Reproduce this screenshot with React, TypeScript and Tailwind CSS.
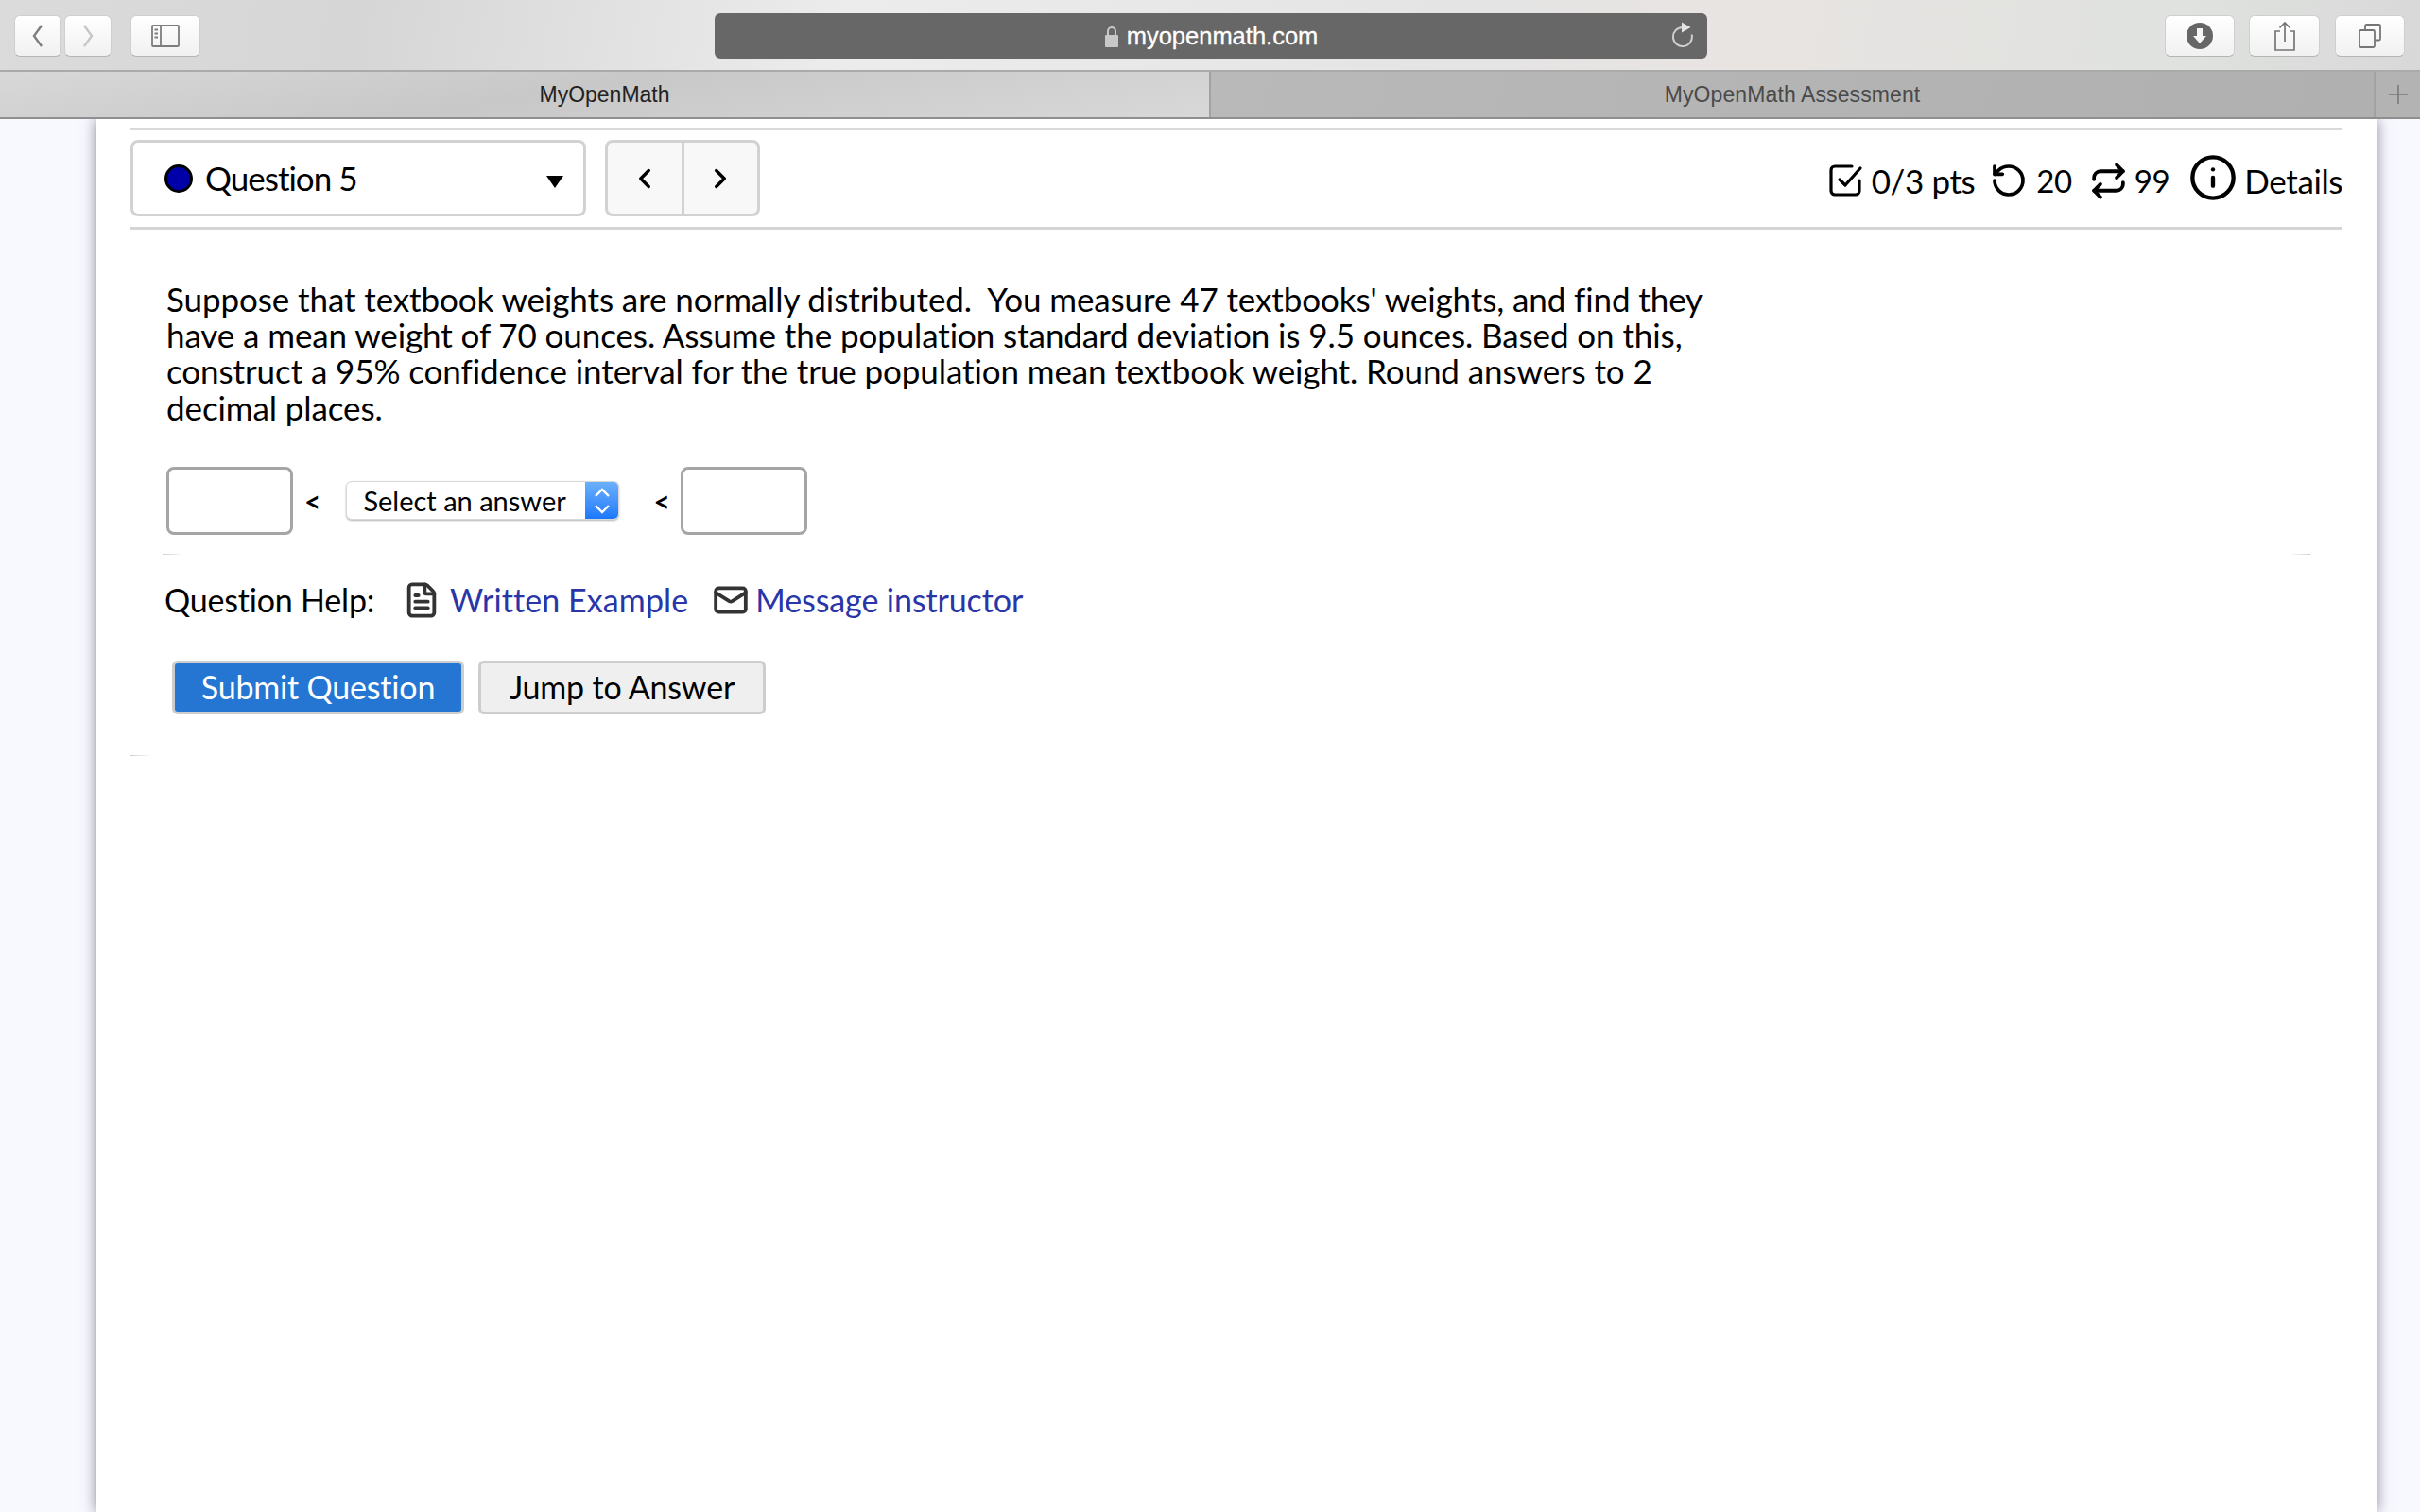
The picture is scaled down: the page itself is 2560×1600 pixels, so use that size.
import React from "react";
import { RotateCcw, Repeat, Info, FileText, Mail, ChevronLeft, ChevronRight } from "lucide-react";

function ToolButton({ className, children }: { className: string; children?: React.ReactNode }) {
  return (
    <div className={"flex h-[44px] items-center justify-center rounded-[6px] border border-[#cfcfcf] border-b-[#b5b5b5] bg-gradient-to-b from-[#ffffff] to-[#f1f1f1] " + className}>
      {children}
    </div>
  );
}

export default function App() {
  return (
    <div className="flex h-[1600px] w-[2560px] flex-col overflow-hidden bg-[#f8f8ff] font-['Lato','Noto_Sans',sans-serif] text-black">
      {/* toolbar */}
      <div className="flex h-[76px] shrink-0 items-start border-b-2 border-[#aaaaaa] bg-[linear-gradient(100deg,#dbdbdb_0%,#d6d6d6_15%,#ececec_35%,#e4e4e4_60%,#e8e4e2_72%,#dfe2df_90%,#d8d8d8_100%)] pl-[15px]">
        <div className="mt-[16px] flex gap-[3px]">
          <ToolButton className="w-[50px]">
            <svg width="22" height="26" viewBox="0 0 22 26" fill="none" stroke="#7d7d7d" strokeWidth="2.4"><path d="M15 2 L7 13 L15 24" /></svg>
          </ToolButton>
          <ToolButton className="w-[50px]">
            <svg width="22" height="26" viewBox="0 0 22 26" fill="none" stroke="#c6c6c6" strokeWidth="2.4"><path d="M7 2 L15 13 L7 24" /></svg>
          </ToolButton>
        </div>
        <ToolButton className="ml-[20px] mt-[16px] w-[74px]">
          <svg width="30" height="24" viewBox="0 0 30 24" fill="none" stroke="#7d7d7d" strokeWidth="1.8">
            <rect x="1" y="1" width="28" height="22" rx="1" />
            <path d="M10 1 V23" />
            <path d="M3.5 5.5 H7 M3.5 9.5 H7 M3.5 13.5 H7" strokeWidth="2" />
          </svg>
        </ToolButton>
        <div className="relative ml-[544px] mt-[14px] flex h-[48px] w-[1050px] items-center justify-center rounded-[6px] bg-[#676767] pt-[1px]">
          <svg width="16" height="24" viewBox="0 0 16 24" className="mr-[8px]">
            <path d="M4 11 V6 a4 4 0 0 1 8 0 V11" fill="none" stroke="#c8c8c8" strokeWidth="2" />
            <rect x="1" y="10" width="14" height="13" rx="1" fill="#c8c8c8" />
          </svg>
          <span className="font-['Liberation_Sans',sans-serif] text-[25.5px] leading-none text-white [-webkit-text-stroke:0.3px_white]">myopenmath.com</span>
          <svg width="26" height="28" viewBox="0 0 26 28" fill="none" stroke="#cfcfcf" strokeWidth="2" className="absolute right-[12px] top-[9px]">
            <path d="M21.6 13.5 A10 10 0 1 1 12 6" />
            <path d="M11 0.5 L20.5 6 L11 11.5 Z" fill="#e4e4e4" stroke="none" />
          </svg>
        </div>
        <ToolButton className="ml-[484px] mt-[16px] w-[74px]">
          <svg width="28" height="28" viewBox="0 0 28 28">
            <circle cx="14" cy="14" r="14" fill="#666666" />
            <path d="M11 6 H17 V14 H21 L14 22 L7 14 H11 Z" fill="#f5f5f5" />
          </svg>
        </ToolButton>
        <ToolButton className="ml-[15px] mt-[16px] w-[75px]">
          <svg width="24" height="32" viewBox="0 0 24 32" fill="none" stroke="#757575" strokeWidth="1.7">
            <path d="M7 11 H2 V31 H22 V11 H17" />
            <path d="M12 22 V2 M6.5 7.5 L12 2 L17.5 7.5" />
          </svg>
        </ToolButton>
        <ToolButton className="ml-[16px] mt-[16px] w-[74px]">
          <svg width="26" height="26" viewBox="0 0 26 26" fill="none" stroke="#757575" strokeWidth="1.8">
            <rect x="2" y="7" width="16" height="18" rx="1.5" />
            <path d="M8 7 V2.5 a1.5 1.5 0 0 1 1.5 -1.5 H22.5 a1.5 1.5 0 0 1 1.5 1.5 V16 a1.5 1.5 0 0 1 -1.5 1.5 H18" />
          </svg>
        </ToolButton>
      </div>
      {/* tabs */}
      <div className="relative z-10 flex h-[50px] shrink-0 border-b-2 border-[#8f8f8f] font-['Liberation_Sans',sans-serif] text-[23px]">
        <div className="flex w-[1279px] items-center justify-center bg-[linear-gradient(170deg,#d8d8d8_0%,#c8c8c8_45%,#d8d8d8_100%)] text-[#222222]">MyOpenMath</div>
        <div className="flex flex-1 items-center justify-center border-l-2 border-[#a2a2a2] bg-[linear-gradient(100deg,#b9b9b9_0%,#b3b3b3_60%,#b0b0b0_100%)] tracking-[0.1px] text-[#4a4a4a]">MyOpenMath Assessment</div>
        <div className="flex w-[49px] items-center justify-center border-l-2 border-[#a2a2a2] bg-[#b3b3b3]">
          <svg width="24" height="24" viewBox="0 0 24 24" stroke="#7a7a7a" strokeWidth="1.6"><path d="M12 2 V22 M2 12 H22" /></svg>
        </div>
      </div>
      {/* page */}
      <div className="ml-[102px] w-[2412px] flex-1 bg-white px-[36px] shadow-[0_0_14px_rgba(100,100,120,0.8)]">
        <div className="mt-[9px] h-[3px] bg-[#d9d9d9]" />
        <div className="flex h-[105px] items-start border-b-[3px] border-[#d5d5d5] pt-[10px]">
          <div className="relative flex h-[81px] w-[482px] items-center rounded-[8px] border-[3px] border-[#d2d2d2] bg-white pl-[33px]">
            <span className="h-[30px] w-[30px] rounded-full border-[3px] border-black bg-[#0000a8]" />
            <span className="ml-[13px] text-[35px] leading-none tracking-[-1px]">Question 5</span>
            <span className="absolute right-[21px] top-[35px] h-0 w-0 border-x-[9px] border-t-[13px] border-x-transparent border-t-black" />
          </div>
          <div className="ml-[20px] flex h-[81px] w-[164px] rounded-[8px] border-[3px] border-[#d2d2d2] bg-[#f8f8f8]">
            <div className="flex flex-1 items-center justify-center border-r-[3px] border-[#d2d2d2]">
              <ChevronLeft size={34} strokeWidth={2.4} />
            </div>
            <div className="flex flex-1 items-center justify-center">
              <ChevronRight size={34} strokeWidth={2.4} />
            </div>
          </div>
          <div className="ml-auto mt-[13px] flex h-[60px] items-center text-[35px] leading-none tracking-[-0.4px]">
            <svg width="36" height="36" viewBox="0 0 36 36" fill="none" stroke="black" strokeWidth="3.2" strokeLinecap="round" strokeLinejoin="round">
              <path d="M32 18 V29 a4 4 0 0 1 -4 4 H6 a4 4 0 0 1 -4 -4 V7 a4 4 0 0 1 4 -4 H24" />
              <path d="M11 17 L17 23 L33 5" />
            </svg>
            <span className="ml-[9px]">0/3 pts</span>
            <RotateCcw size={40} strokeWidth={2.2} className="ml-[16px]" />
            <span className="ml-[9px] text-[33px]">20</span>
            <Repeat size={41} strokeWidth={2.2} className="ml-[18px]" />
            <span className="ml-[7px] text-[33px]">99</span>
            <Info size={52} strokeWidth={2} className="-mt-[6px] ml-[20px]" />
            <span className="ml-[7px]">Details</span>
          </div>
        </div>
        <div className="pl-[38px] pt-[54px]">
          <p className="w-[1660px] text-[35px] leading-[38.2px] tracking-[-0.1px]">
            Suppose that textbook weights are normally distributed.&nbsp; You measure 47 textbooks' weights, and find they have a mean weight of 70 ounces. Assume the population standard deviation is 9.5 ounces. Based on this, construct a 95% confidence interval for the true population mean textbook weight. Round answers to 2 decimal places.
          </p>
          <div className="mt-[44px] flex h-[72px] items-center">
            <div className="h-[72px] w-[134px] rounded-[8px] border-[3px] border-[#a5a5a5] bg-white" />
            <span className="ml-[12px] text-[30px] font-bold leading-none">&lt;</span>
            <div className="ml-[27px] flex h-[41px] w-[289px] overflow-hidden rounded-[6px] border border-[#d8d8d8] bg-white shadow-[0_1px_2px_rgba(0,0,0,0.3)]">
              <span className="flex-1 pl-[17px] text-[29px] leading-[39px]">Select an answer</span>
              <span className="flex w-[35px] items-center justify-center bg-gradient-to-b from-[#6cb0fb] to-[#1a78fb]">
                <svg width="20" height="32" viewBox="0 0 20 32" fill="none" stroke="#ffffff" strokeWidth="2.4"><path d="M3 11 L10 4 L17 11 M3 21 L10 28 L17 21" /></svg>
              </span>
            </div>
            <span className="ml-[36px] text-[30px] font-bold leading-none">&lt;</span>
            <div className="ml-[11px] h-[72px] w-[134px] rounded-[8px] border-[3px] border-[#a5a5a5] bg-white" />
          </div>
          <div className="-ml-[4px] mt-[20px] flex justify-between pr-[34px]">
            <div className="h-[1px] w-[22px] bg-gradient-to-r from-[#cccccc] to-white" />
            <div className="h-[1px] w-[22px] bg-gradient-to-l from-[#cccccc] to-white" />
          </div>
          <div className="-ml-[2px] mt-[26px] flex h-[44px] items-center text-[34px] leading-none tracking-[-0.2px]">
            <span>Question Help:</span>
            <FileText size={40} strokeWidth={2.3} className="ml-[30px] text-[#333333]" />
            <span className="ml-[10px] tracking-[0.1px] text-[#2a35a8]">Written Example</span>
            <Mail size={38} strokeWidth={2.4} className="ml-[26px] text-[#333333]" />
            <span className="ml-[7px] tracking-[-0.1px] text-[#2a35a8]">Message instructor</span>
          </div>
          <div className="ml-[6px] mt-[42px] flex gap-[15px]">
            <div className="flex h-[57px] w-[309px] items-center justify-center rounded-[6px] border-[3px] border-[#cdcdcd] bg-[#2576d2] text-[34px] leading-none tracking-[-0.2px] text-white">Submit Question</div>
            <div className="flex h-[57px] w-[304px] items-center justify-center rounded-[6px] border-[3px] border-[#cdcdcd] bg-[#efefef] text-[34px] leading-none tracking-[-0.2px]">Jump to Answer</div>
          </div>
        </div>
        <div className="mt-[43px] h-[1px] w-[22px] bg-gradient-to-r from-[#cccccc] to-white" />
      </div>
    </div>
  );
}
